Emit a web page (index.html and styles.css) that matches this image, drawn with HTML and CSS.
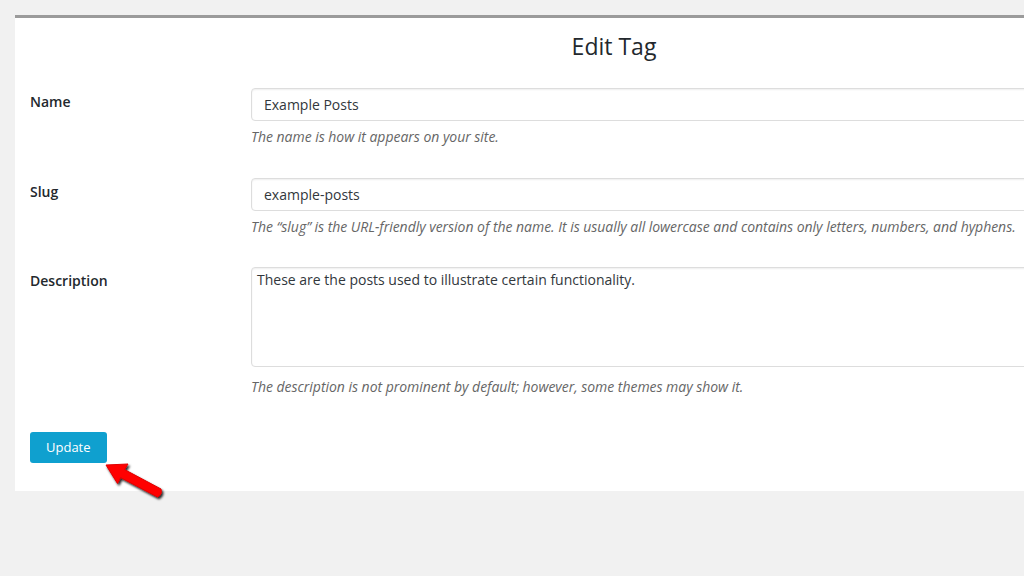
FILE: index.html
```html
<!DOCTYPE html>
<html lang="en">
<head>
<meta charset="utf-8">
<title>Edit Tag</title>
<link rel="stylesheet" href="styles.css">
</head>
<body>
<div class="panel">
  <h1 class="title">Edit Tag</h1>
  <form class="form-table">
    <div class="row">
      <label class="label">Name</label>
      <div class="field">
        <input class="input" type="text" value="Example Posts">
        <p class="hint">The name is how it appears on your site.</p>
      </div>
    </div>
    <div class="row">
      <label class="label">Slug</label>
      <div class="field">
        <input class="input" type="text" value="example-posts">
        <p class="hint">The “slug” is the URL-friendly version of the name. It is usually all lowercase and contains only letters, numbers, and hyphens.</p>
      </div>
    </div>
    <div class="row row-area">
      <label class="label">Description</label>
      <div class="field">
        <textarea class="textarea">These are the posts used to illustrate certain functionality.</textarea>
        <p class="hint hint-area">The description is not prominent by default; however, some themes may show it.</p>
      </div>
    </div>
    <div class="actions">
      <button class="button" type="button">Update</button>
    </div>
  </form>
  <svg class="arrow" width="70" height="50" viewBox="0 0 70 50" aria-hidden="true">
    <defs>
      <filter id="sh" x="-30%" y="-30%" width="160%" height="160%">
        <feDropShadow dx="1.5" dy="2" stdDeviation="1.2" flood-color="#000" flood-opacity="0.85"/>
      </filter>
    </defs>
    <path filter="url(#sh)" fill="#ff0000" stroke="#e00000" stroke-width="1" stroke-linejoin="round"
      d="M7 10 L29 9 L25.6 14.6 L62 34 Q63.5 39.5 58.5 42 L21.6 22.6 L18.5 28.5 Z"/>
  </svg>
</div>
</body>
</html>
```

FILE: styles.css
```css
html, body {
  margin: 0;
  padding: 0;
  overflow: hidden;
}
body {
  background: #f1f1f1;
  font-family: "Open Sans", "Liberation Sans", sans-serif;
  font-size: 14px;
  color: #23282d;
  height: 576px;
}
.panel {
  position: relative;
  box-sizing: border-box;
  margin: 15px 0 0 15px;
  width: 1198px;
  height: 476px;
  background: #fff;
  border-top: 3px solid #9b9b9b;
  padding: 0 0 0 15px;
}
.title {
  margin: 13px 0 0 -15px;
  font-size: 23px;
  font-weight: 400;
  line-height: 30px;
  text-align: center;
  color: #23282d;
}
.form-table {
  margin: 27px 0 0 0;
}
.row {
  display: grid;
  grid-template-columns: 221px 1fr;
  margin-bottom: 31px;
}
.row-area {
  margin-top: -1px;
}
.label {
  padding-top: 4px;
  font-weight: 600;
  line-height: 20px;
  color: #23282d;
}
.field {
  min-width: 0;
}
.input,
.textarea {
  display: block;
  box-sizing: border-box;
  width: 100%;
  margin: 0;
  border: 1px solid #ddd;
  border-radius: 4px;
  box-shadow: inset 0 1px 2px rgba(0, 0, 0, 0.07);
  background: #fff;
  color: #32373c;
  font-family: "Open Sans", "Liberation Sans", sans-serif;
  font-size: 14px;
  outline: none;
}
.input {
  height: 33px;
  padding: 0 12px;
  line-height: 20px;
}
.textarea {
  height: 100px;
  padding: 2px 5px;
  line-height: 20px;
  resize: none;
}
.hint {
  margin: 6px 0 0 0;
  font-style: italic;
  line-height: 20px;
  color: #666;
  white-space: nowrap;
  letter-spacing: -0.03px;
}
.hint-area {
  margin-top: 10px;
}
.actions {
  margin-top: 35px;
}
.button {
  box-sizing: border-box;
  height: 31px;
  padding: 0 16px;
  border: none;
  border-radius: 3px;
  background: #0fa0cf;
  color: #fff;
  font-family: "Open Sans", "Liberation Sans", sans-serif;
  font-size: 13px;
  line-height: 31px;
}
.arrow {
  position: absolute;
  left: 84px;
  top: 437px;
}
```
